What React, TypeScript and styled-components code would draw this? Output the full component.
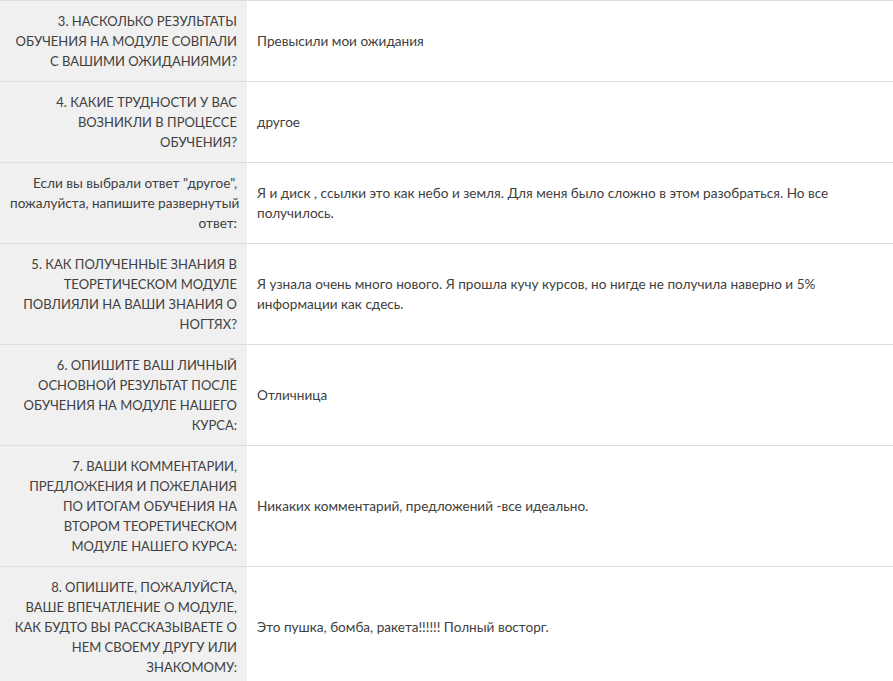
import React from 'react'
import styled, { createGlobalStyle } from 'styled-components'

const GlobalStyle = createGlobalStyle`
  html, body {
    margin: 0;
    padding: 0;
    background: #ffffff;
  }
  body {
    font-family: Lato, "Open Sans", "Liberation Sans", sans-serif;
    overflow: hidden;
  }
`

type Answer = {
  id: number
  question: string[]
  answer: string
  plain?: boolean
}

const answers: Answer[] = [
  {
    id: 1,
    question: ['3. Насколько результаты', 'обучения на модуле совпали', 'с вашими ожиданиями?'],
    answer: 'Превысили мои ожидания',
  },
  {
    id: 2,
    question: ['4. Какие трудности у вас', 'возникли в процессе', 'обучения?'],
    answer: 'другое',
  },
  {
    id: 3,
    question: ['Если вы выбрали ответ "другое",', 'пожалуйста, напишите развернутый', 'ответ:'],
    answer: 'Я и диск , ссылки это как небо и земля. Для меня было сложно в этом разобраться. Но все получилось.',
    plain: true,
  },
  {
    id: 4,
    question: ['5. Как полученные знания в', 'теоретическом модуле', 'повлияли на ваши знания о', 'ногтях?'],
    answer: 'Я узнала очень много нового. Я прошла кучу курсов, но нигде не получила наверно и 5% информации как сдесь.',
  },
  {
    id: 5,
    question: ['6. Опишите ваш личный', 'основной результат после', 'обучения на модуле нашего', 'курса:'],
    answer: 'Отличница',
  },
  {
    id: 6,
    question: [
      '7. Ваши комментарии,',
      'предложения и пожелания',
      'по итогам обучения на',
      'втором теоретическом',
      'модуле нашего курса:',
    ],
    answer: 'Никаких комментарий, предложений -все идеально.',
  },
  {
    id: 7,
    question: [
      '8. Опишите, пожалуйста,',
      'ваше впечатление о модуле,',
      'как будто вы рассказываете о',
      'нем своему другу или',
      'знакомому:',
    ],
    answer: 'Это пушка, бомба, ракета!!!!!! Полный восторг.',
  },
]

export default function App() {
  return (
    <>
      <GlobalStyle />
      <Table>
        <tbody>
          {answers.map((item) => (
            <Row key={item.id}>
              <QuestionCell $plain={item.plain}>
                {item.question.map((line, i) => (
                  <QuestionLine key={i}>{line}</QuestionLine>
                ))}
              </QuestionCell>
              <AnswerCell>{item.answer}</AnswerCell>
            </Row>
          ))}
        </tbody>
      </Table>
    </>
  )
}

const Table = styled.table`
  width: 893px;
  border-collapse: collapse;
  table-layout: fixed;
  line-height: 20px;
  color: #404040;
`

const Row = styled.tr`
  border-top: 1px solid #dddddd;
`

const QuestionCell = styled.td<{ $plain?: boolean }>`
  width: 227px;
  padding: 10px;
  background: #f0f0f0;
  text-align: right;
  vertical-align: middle;
  font-size: ${(p) => (p.$plain ? '13.6px' : '13px')};
  text-transform: ${(p) => (p.$plain ? 'none' : 'uppercase')};
`

const QuestionLine = styled.div`
  white-space: nowrap;
`

const AnswerCell = styled.td`
  padding: 10px;
  vertical-align: middle;
  font-size: 13.6px;
`
